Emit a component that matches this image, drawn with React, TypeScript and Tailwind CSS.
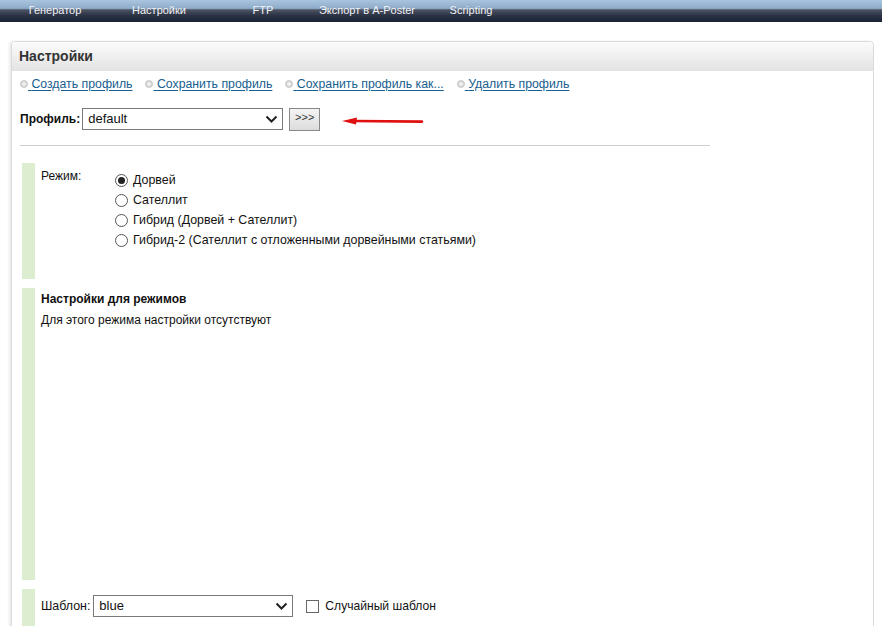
import React from "react"

const tabs = ["Генератор", "Настройки", "FTP", "Экспорт в A-Poster", "Scripting"]

const links = [
  "Создать профиль",
  "Сохранить профиль",
  "Сохранить профиль как...",
  "Удалить профиль",
]

const modes = [
  "Дорвей",
  "Сателлит",
  "Гибрид (Дорвей + Сателлит)",
  "Гибрид-2 (Сателлит с отложенными дорвейными статьями)",
]

function Chevron() {
  return (
    <svg width="13" height="9" viewBox="0 0 13 9" className="shrink-0">
      <path d="M1.5 1.5 L6.5 6.5 L11.5 1.5" fill="none" stroke="#222" strokeWidth="2" />
    </svg>
  )
}

function FakeSelect({ value, className }: { value: string; className: string }) {
  return (
    <div
      className={`flex items-center justify-between border border-[#7a7a7a] bg-white pl-[5px] pr-[4px] text-[13px] leading-none text-[#111] ${className}`}
    >
      <span className="-mt-[2px]">{value}</span>
      <Chevron />
    </div>
  )
}

function Radio({ checked }: { checked?: boolean }) {
  return (
    <span className="flex h-[13px] w-[13px] shrink-0 items-center justify-center rounded-full border border-[#555] bg-white">
      {checked && <span className="h-[7px] w-[7px] rounded-full bg-[#222]" />}
    </span>
  )
}

function Block({ className, children }: { className: string; children?: React.ReactNode }) {
  return (
    <div className={`flex ${className}`}>
      <div className="w-[13px] shrink-0 bg-[#dcedd0]" />
      <div className="flex-1 pl-[6px]">{children}</div>
    </div>
  )
}

export default function App() {
  return (
    <div className="h-[626px] w-[882px] overflow-hidden bg-white font-['Liberation_Sans',Arial,sans-serif] text-[12px] text-[#111]">
      {/* top menu */}
      <div className="flex h-[22px] bg-[linear-gradient(to_bottom,#a9c4de_0%,#8eabc9_38%,#4d5361_45%,#2c3346_70%,#1a2236_100%)] pl-[3px]">
        {tabs.map((t) => (
          <div key={t} className="flex w-[104px] items-center justify-center pb-[1px] text-[11px] text-[#eef2f7]">
            {t}
          </div>
        ))}
      </div>

      {/* settings panel */}
      <div className="ml-[11px] mr-[8px] mt-[19px] h-[620px] rounded-t-[4px] border border-[#dadada] shadow-[-2px_0_3px_rgba(0,0,0,0.08)]">
        <div className="flex h-[29px] items-center rounded-t-[4px] bg-[linear-gradient(to_bottom,#fbfbfb,#e3e3e3)] pl-[7px] text-[14px] font-bold text-[#333]">
          Настройки
        </div>

        <div className="pl-[8px]">
          <div className="mt-[5px] flex h-[16px] items-center text-[12.3px]">
            {links.map((l, i) => (
              <div key={l} className={`flex items-center ${i > 0 ? "ml-[13px]" : ""}`}>
                <span className="h-[8px] w-[8px] rounded-full border border-[#c8c8c8] bg-[radial-gradient(circle,#f4f4f4_20%,#d0d0d0_70%)]" />
                <span className="text-[#17608f] underline underline-offset-[2px]">&nbsp;{l}</span>
              </div>
            ))}
          </div>

          <div className="mt-[15px] flex h-[24px] items-center">
            <span className="mr-[2px] text-[12px] font-bold">Профиль:</span>
            <FakeSelect value="default" className="h-[22px] w-[201px]" />
            <div className="ml-[6px] flex h-[23px] w-[31px] items-start justify-center border border-[#888] bg-[linear-gradient(to_bottom,#f4f4f4,#dcdcdc)] pt-[3px] text-[11px] leading-none text-[#333]">
              &gt;&gt;&gt;
            </div>
            <svg width="82" height="10" viewBox="0 0 82 10" className="ml-[22px] mt-[4px]">
              <path d="M12 5 L80 5.6" stroke="#e01010" strokeWidth="2.6" strokeLinecap="round" />
              <path d="M0 5 L15 1.5 L14 8.6 Z" fill="#e01010" />
            </svg>
          </div>

          <div className="mt-[14px] h-px w-[690px] bg-[#cfcfcf]" />

          <Block className="ml-[2px] mt-[17px] h-[116px]">
            <div className="flex pt-[6px]">
              <div className="w-[74px] leading-[14px]">Режим:</div>
              <div className="flex flex-col pt-[1px] text-[12.4px]">
                {modes.map((m, i) => (
                  <div key={m} className="flex h-[20px] items-center">
                    <Radio checked={i === 0} />
                    <span className="ml-[5px]">{m}</span>
                  </div>
                ))}
              </div>
            </div>
          </Block>

          <Block className="ml-[2px] mt-[9px] h-[292px]">
            <div className="pt-[4px] font-bold leading-[14px]">Настройки для режимов</div>
            <div className="mt-[7px] leading-[14px]">Для этого режима настройки отсутствуют</div>
          </Block>

          <Block className="ml-[2px] mt-[9px] h-[40px]">
            <div className="mt-[6px] flex items-center">
              <span className="mr-[3px] text-[12.4px]">Шаблон:</span>
              <FakeSelect value="blue" className="h-[22px] w-[200px]" />
              <span className="ml-[13px] h-[13px] w-[13px] border border-[#666] bg-white" />
              <span className="ml-[6px] text-[12.1px]">Случайный шаблон</span>
            </div>
          </Block>
        </div>
      </div>
    </div>
  )
}
